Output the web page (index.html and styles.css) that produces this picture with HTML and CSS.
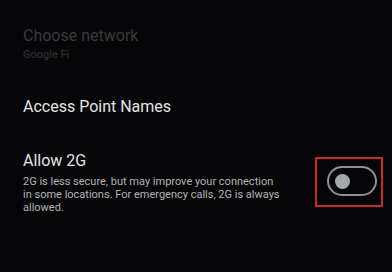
FILE: index.html
```html
<!DOCTYPE html>
<html>
<head>
<meta charset="utf-8">
<link rel="stylesheet" href="styles.css">
</head>
<body>
<div class="screen">
  <div class="item dim">
    <div class="title">Choose network</div>
    <div class="summary">Google Fi</div>
  </div>
  <div class="item apn">
    <div class="title">Access Point Names</div>
  </div>
  <div class="item row">
    <div class="text">
      <div class="title">Allow 2G</div>
      <div class="desc">2G is less secure, but may improve your connection in some locations. For emergency calls, 2G is always allowed.</div>
    </div>
    <div class="highlight">
      <div class="switch"><div class="knob"></div></div>
    </div>
  </div>
</div>
</body>
</html>
```
FILE: styles.css
```css
html, body {
  margin: 0;
  padding: 0;
  background: #060608;
}
body {
  width: 392px;
  height: 272px;
  overflow: hidden;
  font-family: Roboto, "Noto Sans", sans-serif;
}
.screen {
  display: flex;
  flex-direction: column;
  padding: 26px 9px 0 23px;
}
.title {
  font-size: 16px;
  line-height: 20px;
  color: #e4e4e4;
}
.summary {
  font-size: 11px;
  line-height: 14px;
  color: #333;
  margin-top: 2px;
}
.dim .title {
  color: #3a3a3c;
}
.apn {
  margin-top: 35px;
}
.row {
  margin-top: 34px;
  display: flex;
  align-items: flex-start;
}
.text {
  flex: 1;
}
.desc {
  font-size: 11px;
  line-height: 13px;
  color: #b4b4b4;
  margin-top: 4px;
  width: 260px;
}
.highlight {
  margin-top: 6px;
  width: 64px;
  height: 46px;
  border: 2px solid #d1232b;
  display: flex;
  align-items: center;
  justify-content: center;
}
.switch {
  width: 40px;
  height: 26px;
  border: 2px solid #8d9293;
  border-radius: 15px;
  display: flex;
  align-items: center;
  padding-left: 6px;
  margin-left: 6px;
  margin-bottom: 2px;
}
.knob {
  width: 15px;
  height: 15px;
  border-radius: 50%;
  background: #a3a8a8;
}
```
